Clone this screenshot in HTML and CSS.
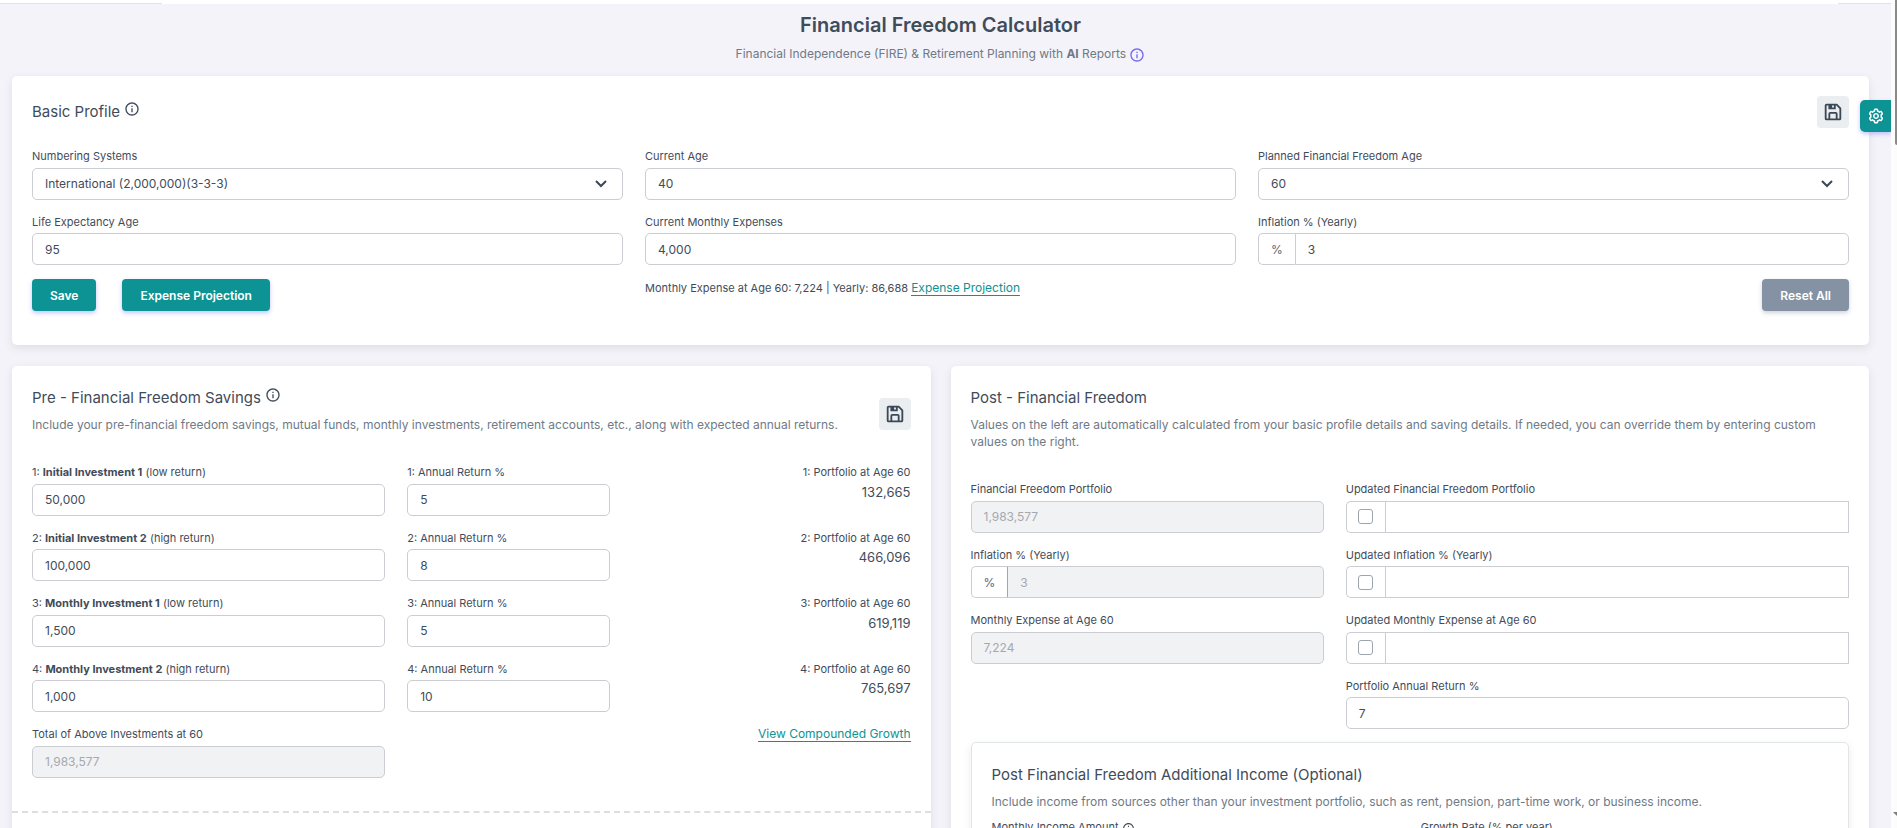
FILE: index.html
```
<!DOCTYPE html>
<html lang="en">
<head>
    <meta charset="UTF-8">
    <meta name="viewport" content="width=device-width, initial-scale=1">
    <title>Financial Freedom Calculator</title>
    <link rel="stylesheet" href="styles.css">
</head>
<body>

    <!-- shared icons -->
    <svg class="sprite" aria-hidden="true">
        <symbol id="icon-info" viewBox="0 0 24 24">
            <path d="M12 2C6.486 2 2 6.486 2 12s4.486 10 10 10 10-4.486 10-10S17.514 2 12 2zm0 18c-4.411 0-8-3.589-8-8s3.589-8 8-8 8 3.589 8 8-3.589 8-8 8z"/>
            <path d="M11 11h2v6h-2zm0-4h2v2h-2z"/>
        </symbol>
        <symbol id="icon-save" viewBox="0 0 24 24">
            <path d="M5 21h14a2 2 0 0 0 2-2V8a1 1 0 0 0-.29-.71l-4-4A1 1 0 0 0 16 3H5a2 2 0 0 0-2 2v14a2 2 0 0 0 2 2zm10-2H9v-5h6zM13 7h-2V5h2zM5 5h2v4h8V5h.59L19 8.41V19h-2v-5a2 2 0 0 0-2-2H9a2 2 0 0 0-2 2v5H5z"/>
        </symbol>
        <symbol id="icon-cog" viewBox="0 0 24 24">
            <path d="M12 16c2.206 0 4-1.794 4-4s-1.794-4-4-4-4 1.794-4 4 1.794 4 4 4zm0-6c1.084 0 2 .916 2 2s-.916 2-2 2-2-.916-2-2 .916-2 2-2z"/>
            <path d="m2.845 16.136 1 1.73c.531.917 1.809 1.261 2.73.73l.529-.306A8.1 8.1 0 0 0 9 19.402V20c0 1.103.897 2 2 2h2c1.103 0 2-.897 2-2v-.598a8.132 8.132 0 0 0 1.896-1.111l.529.306c.923.53 2.198.188 2.731-.731l.999-1.729a2.001 2.001 0 0 0-.731-2.732l-.505-.292a7.718 7.718 0 0 0 0-2.224l.505-.292a2.002 2.002 0 0 0 .731-2.732l-.999-1.729c-.531-.92-1.808-1.265-2.731-.732l-.529.306A8.1 8.1 0 0 0 15 4.598V4c0-1.103-.897-2-2-2h-2c-1.103 0-2 .897-2 2v.598a8.132 8.132 0 0 0-1.896 1.111l-.529-.306c-.924-.531-2.2-.187-2.731.732l-.999 1.729a2.001 2.001 0 0 0 .731 2.732l.505.292a7.683 7.683 0 0 0 0 2.223l-.505.292a2.003 2.003 0 0 0-.731 2.733zm3.326-2.758A5.703 5.703 0 0 1 6 12c0-.462.058-.926.17-1.378a.999.999 0 0 0-.47-1.108l-1.123-.65.998-1.729 1.145.662a.997.997 0 0 0 1.188-.142 6.071 6.071 0 0 1 2.384-1.399A1 1 0 0 0 11 5.3V4h2v1.3a1 1 0 0 0 .708.956 6.083 6.083 0 0 1 2.384 1.399.999.999 0 0 0 1.188.142l1.144-.661 1 1.729-1.124.649a1 1 0 0 0-.47 1.108c.112.452.17.916.17 1.378 0 .461-.058.925-.171 1.378a1 1 0 0 0 .471 1.108l1.123.649-.998 1.729-1.145-.661a.996.996 0 0 0-1.188.142 6.071 6.071 0 0 1-2.384 1.399A1 1 0 0 0 13 18.7l.002 1.3H11v-1.3a1 1 0 0 0-.708-.956 6.083 6.083 0 0 1-2.384-1.399.992.992 0 0 0-1.188-.141l-1.144.662-1-1.729 1.124-.651a1 1 0 0 0 .471-1.108z"/>
        </symbol>
    </svg>

    <header class="navbar"><div class="navbar-inner"></div></header>

    <main class="page">
        <div class="page-header">
            <h1>Financial Freedom Calculator</h1>
            <p>Financial Independence (FIRE) &amp; Retirement Planning with <strong>AI</strong> Reports
                <svg class="icon icon-accent"><use href="#icon-info"/></svg></p>
        </div>

        <section class="card profile">
            <div class="card-header">
                <h2>Basic Profile <svg class="icon icon-raised"><use href="#icon-info"/></svg></h2>
                <button type="button" class="btn-icon" aria-label="Save profile"><svg><use href="#icon-save"/></svg></button>
            </div>
            <form>
                <div class="row row-3">
                    <div class="field">
                        <label for="numbering">Numbering Systems</label>
                        <select id="numbering" class="control"><option>International (2,000,000)(3-3-3)</option></select>
                    </div>
                    <div class="field">
                        <label for="currentAge">Current Age</label>
                        <input type="text" id="currentAge" class="control" value="40">
                    </div>
                    <div class="field">
                        <label for="freedomAge">Planned Financial Freedom Age</label>
                        <select id="freedomAge" class="control"><option>60</option></select>
                    </div>
                    <div class="field">
                        <label for="lifeAge">Life Expectancy Age</label>
                        <input type="text" id="lifeAge" class="control" value="95">
                    </div>
                    <div class="field">
                        <label for="expenses">Current Monthly Expenses</label>
                        <input type="text" id="expenses" class="control" value="4,000">
                    </div>
                    <div class="field">
                        <label for="inflation">Inflation % (Yearly)</label>
                        <div class="input-group">
                            <span class="addon">%</span>
                            <input type="text" id="inflation" class="control" value="3">
                        </div>
                    </div>
                </div>
                <div class="row row-3 actions">
                    <div class="buttons">
                        <button type="button" class="btn">Save</button>
                        <button type="button" class="btn">Expense Projection</button>
                    </div>
                    <p class="summary">Monthly Expense at Age 60: 7,224 | Yearly: 86,688 <a href="#">Expense Projection</a></p>
                    <div class="buttons buttons-end">
                        <button type="reset" class="btn btn-secondary">Reset All</button>
                    </div>
                </div>
            </form>
        </section>

        <div class="columns">
            <section class="card">
                <div class="card-header">
                    <div>
                        <h2>Pre - Financial Freedom Savings <svg class="icon icon-raised"><use href="#icon-info"/></svg></h2>
                        <p class="desc">Include your pre-financial freedom savings, mutual funds, monthly investments, retirement accounts, etc., along with expected annual returns.</p>
                    </div>
                    <button type="button" class="btn-icon" aria-label="Save savings"><svg><use href="#icon-save"/></svg></button>
                </div>
                <form class="row row-12">
                    <div class="field span-5">
                        <label for="inv1">1: <strong>Initial Investment 1</strong> (low return)</label>
                        <input type="text" id="inv1" class="control" value="50,000">
                    </div>
                    <div class="field span-3">
                        <label for="ret1">1: Annual Return %</label>
                        <input type="text" id="ret1" class="control" value="5">
                    </div>
                    <div class="field span-4 result">
                        <label for="out1">1: Portfolio at Age 60</label>
                        <output id="out1">132,665</output>
                    </div>

                    <div class="field span-5">
                        <label for="inv2">2: <strong>Initial Investment 2</strong> (high return)</label>
                        <input type="text" id="inv2" class="control" value="100,000">
                    </div>
                    <div class="field span-3">
                        <label for="ret2">2: Annual Return %</label>
                        <input type="text" id="ret2" class="control" value="8">
                    </div>
                    <div class="field span-4 result">
                        <label for="out2">2: Portfolio at Age 60</label>
                        <output id="out2">466,096</output>
                    </div>

                    <div class="field span-5">
                        <label for="inv3">3: <strong>Monthly Investment 1</strong> (low return)</label>
                        <input type="text" id="inv3" class="control" value="1,500">
                    </div>
                    <div class="field span-3">
                        <label for="ret3">3: Annual Return %</label>
                        <input type="text" id="ret3" class="control" value="5">
                    </div>
                    <div class="field span-4 result">
                        <label for="out3">3: Portfolio at Age 60</label>
                        <output id="out3">619,119</output>
                    </div>

                    <div class="field span-5">
                        <label for="inv4">4: <strong>Monthly Investment 2</strong> (high return)</label>
                        <input type="text" id="inv4" class="control" value="1,000">
                    </div>
                    <div class="field span-3">
                        <label for="ret4">4: Annual Return %</label>
                        <input type="text" id="ret4" class="control" value="10">
                    </div>
                    <div class="field span-4 result">
                        <label for="out4">4: Portfolio at Age 60</label>
                        <output id="out4">765,697</output>
                    </div>

                    <div class="field span-5">
                        <label for="total">Total of Above Investments at 60</label>
                        <input type="text" id="total" class="control" value="1,983,577" disabled>
                    </div>
                    <div class="span-7 result"><a href="#">View Compounded Growth</a></div>
                </form>
                <hr class="divider">
            </section>

            <section class="card">
                <div class="card-header">
                    <div>
                        <h2>Post - Financial Freedom</h2>
                        <p class="desc">Values on the left are automatically calculated from your basic profile details and saving details. If needed, you can override them by entering custom values on the right.</p>
                    </div>
                </div>
                <form class="row row-12">
                    <div class="field span-5">
                        <label for="portfolio">Financial Freedom Portfolio</label>
                        <input type="text" id="portfolio" class="control" value="1,983,577" disabled>
                    </div>
                    <div class="field span-7">
                        <label for="newPortfolio">Updated Financial Freedom Portfolio</label>
                        <div class="input-group square">
                            <span class="addon"><input type="checkbox" class="check" aria-label="Override portfolio"></span>
                            <input type="text" id="newPortfolio" class="control">
                        </div>
                    </div>

                    <div class="field span-5">
                        <label for="postInflation">Inflation % (Yearly)</label>
                        <div class="input-group locked">
                            <span class="addon">%</span>
                            <input type="text" id="postInflation" class="control" value="3" disabled>
                        </div>
                    </div>
                    <div class="field span-7">
                        <label for="newInflation">Updated Inflation % (Yearly)</label>
                        <div class="input-group square">
                            <span class="addon"><input type="checkbox" class="check" aria-label="Override inflation"></span>
                            <input type="text" id="newInflation" class="control">
                        </div>
                    </div>

                    <div class="field span-5">
                        <label for="postExpense">Monthly Expense at Age 60</label>
                        <input type="text" id="postExpense" class="control" value="7,224" disabled>
                    </div>
                    <div class="field span-7">
                        <label for="newExpense">Updated Monthly Expense at Age 60</label>
                        <div class="input-group square">
                            <span class="addon"><input type="checkbox" class="check" aria-label="Override expense"></span>
                            <input type="text" id="newExpense" class="control">
                        </div>
                    </div>

                    <div class="field span-7 from-6">
                        <label for="postReturn">Portfolio Annual Return %</label>
                        <input type="text" id="postReturn" class="control" value="7">
                    </div>
                </form>

                <div class="subcard">
                    <h2>Post Financial Freedom Additional Income (Optional)</h2>
                    <p class="desc">Include income from sources other than your investment portfolio, such as rent, pension, part-time work, or business income.</p>
                    <form class="row row-2">
                        <div class="field">
                            <label for="income">Monthly Income Amount <svg class="icon icon-small"><use href="#icon-info"/></svg></label>
                            <input type="text" id="income" class="control">
                        </div>
                        <div class="field">
                            <label for="growth">Growth Rate (% per year)</label>
                            <input type="text" id="growth" class="control">
                        </div>
                    </form>
                </div>
            </section>
        </div>
    </main>

    <button type="button" class="settings" aria-label="Settings"><svg><use href="#icon-cog"/></svg></button>

    <div class="scrollbar"><div class="thumb"></div><div class="arrow"></div></div>

</body>
</html>
```
FILE: styles.css
```
* {
    box-sizing: border-box;
}
html, body {
    height: 100%;
}
body {
    margin: 0;
    overflow: hidden;
    background: #f4f3f9;
    color: #3f4c5a;
    font-family: Inter, "Noto Sans", sans-serif;
    font-size: 12px;
}
h1, h2, p {
    margin: 0;
}
a {
    color: #0d9394;
    font-size: 12px;
    text-decoration: none;
    border-bottom: 1px solid #0d9394;
}
.sprite {
    position: absolute;
    width: 0;
    height: 0;
}
.icon {
    width: 16px;
    height: 16px;
    fill: currentColor;
    vertical-align: middle;
}
.icon-accent {
    color: #7367f0;
}
.icon-raised {
    vertical-align: 0;
}
.icon-small {
    width: 13px;
    height: 13px;
}

/* bottom edge of the sticky nav */
.navbar {
    height: 4px;
    padding: 0 59px 0 162px;
    background: linear-gradient(#fff 3px, #e2e1e8 3px);
}
.navbar-inner {
    height: 4px;
    background: #fff;
}

.page {
    padding: 0 28px 24px 12px;
}
.page-header {
    height: 72px;
    padding-top: 8px;
    text-align: center;
}
.page-header h1 {
    font-size: 20px;
    line-height: 26px;
    font-weight: 600;
}
.page-header p {
    margin-top: 6px;
    line-height: 20px;
    color: #6f7a86;
}

.card {
    padding: 20px;
    background: #fff;
    border-radius: 5px;
    box-shadow: 0 3px 8px rgba(60, 70, 80, 0.12);
}
.card-header {
    display: flex;
    justify-content: space-between;
    align-items: center;
    gap: 20px;
}
.profile {
    margin-bottom: 21px;
    padding-bottom: 34px;
}
.profile .card-header {
    height: 31px;
    margin-bottom: 21px;
}
h2 {
    font-size: 15px;
    line-height: 24px;
    font-weight: 400;
}
.desc {
    margin: 6px 0 9px;
    line-height: 17px;
    color: #6f7a86;
}
.columns {
    display: grid;
    grid-template-columns: 1fr 1fr;
    gap: 20px;
}
.columns .card-header {
    margin-bottom: 22px;
}

.row {
    display: grid;
    gap: 14px 22px;
}
.row-2 {
    grid-template-columns: repeat(2, 1fr);
}
.row-3 {
    grid-template-columns: repeat(3, 1fr);
}
.row-12 {
    grid-template-columns: repeat(12, 1fr);
}
.span-3 {
    grid-column: span 3;
}
.span-4 {
    grid-column: span 4;
}
.span-5 {
    grid-column: span 5;
}
.span-7 {
    grid-column: span 7;
}
.from-6 {
    grid-column: 6 / span 7;
}

label {
    display: block;
    margin-bottom: 3px;
    font-size: 11px;
    line-height: 1.5;
}
.control {
    display: block;
    width: 100%;
    height: 32px;
    padding: 0 12px;
    border: 1px solid #cbcdd3;
    border-radius: 5px;
    background: #fff;
    color: #3f4c5a;
    font: inherit;
}
.control:disabled {
    background: #f1f2f4;
    color: #a5a9ae;
}
select.control {
    appearance: none;
    background: #fff url('data:image/svg+xml,<svg xmlns="http://www.w3.org/2000/svg" viewBox="0 0 12 8" fill="none" stroke="%233b4856" stroke-width="2"><path d="M1 1l5 5 5-5"/></svg>') no-repeat right 15px center / 12px 8px;
}
.input-group {
    display: flex;
}
.addon {
    display: flex;
    align-items: center;
    padding: 0 12px;
    border: 1px solid #cbcdd3;
    border-right: 0;
    border-radius: 5px 0 0 5px;
    color: #5a6673;
}
.input-group .control {
    flex: 1;
    border-radius: 0 5px 5px 0;
}
.square .addon {
    padding: 0 12px 0 11px;
}
.square .control {
    border-radius: 0;
}
.locked .control {
    border-left-color: #9fa6ae;
}
.check {
    appearance: none;
    width: 15px;
    height: 15px;
    margin: 0;
    border: 1px solid #9da4ae;
    border-radius: 3px;
}
.result {
    text-align: right;
}
.result output {
    display: block;
    font-size: 13px;
    line-height: 16px;
}

.actions {
    margin-top: 14px;
}
.buttons {
    display: flex;
    gap: 26px;
}
.buttons-end {
    justify-content: flex-end;
}
.btn {
    height: 32px;
    padding: 0 18px;
    border: 0;
    border-radius: 4px;
    background: #0d9394;
    color: #fff;
    font: inherit;
    font-weight: 600;
    box-shadow: 0 2px 4px rgba(105, 108, 255, 0.4);
    cursor: pointer;
}
.btn-secondary {
    background: #8592a3;
    box-shadow: 0 2px 4px rgba(133, 146, 163, 0.4);
}
.summary {
    font-size: 11px;
    line-height: 18px;
}
.btn-icon {
    display: flex;
    flex: none;
    align-items: center;
    justify-content: center;
    width: 32px;
    height: 32px;
    padding: 0;
    border: 0;
    border-radius: 4px;
    background: #ebeef0;
}
.btn-icon svg {
    width: 22px;
    height: 22px;
    fill: #3b4856;
}
.divider {
    margin: 33px -20px 30px;
    border: 0;
    border-top: 2px dashed #dcdfe1;
}
.subcard {
    margin-top: 13px;
    padding: 20px;
    border: 1px solid #e2e5e8;
    border-radius: 5px;
    box-shadow: 0 3px 8px rgba(60, 70, 80, 0.1);
}

.settings {
    position: fixed;
    top: 100px;
    right: 6px;
    display: flex;
    align-items: center;
    justify-content: center;
    width: 31px;
    height: 32px;
    padding: 0;
    border: 0;
    border-radius: 5px 0 0 5px;
    background: #0d9394;
    box-shadow: 0 2px 4px rgba(105, 108, 255, 0.4);
}
.settings svg {
    width: 18px;
    height: 18px;
    fill: #fff;
}
.scrollbar {
    position: fixed;
    top: 0;
    right: 0;
    bottom: 0;
    width: 6px;
    background: #fcfcfc;
    overflow: hidden;
}
.thumb {
    height: 145px;
    margin-left: 4px;
    border-radius: 0 0 0 4px;
    background: #8a8a8a;
}
.arrow {
    position: absolute;
    right: -4px;
    bottom: 12px;
    border: 4px solid transparent;
    border-top-color: #7d7d7d;
    border-bottom: 0;
}
```
